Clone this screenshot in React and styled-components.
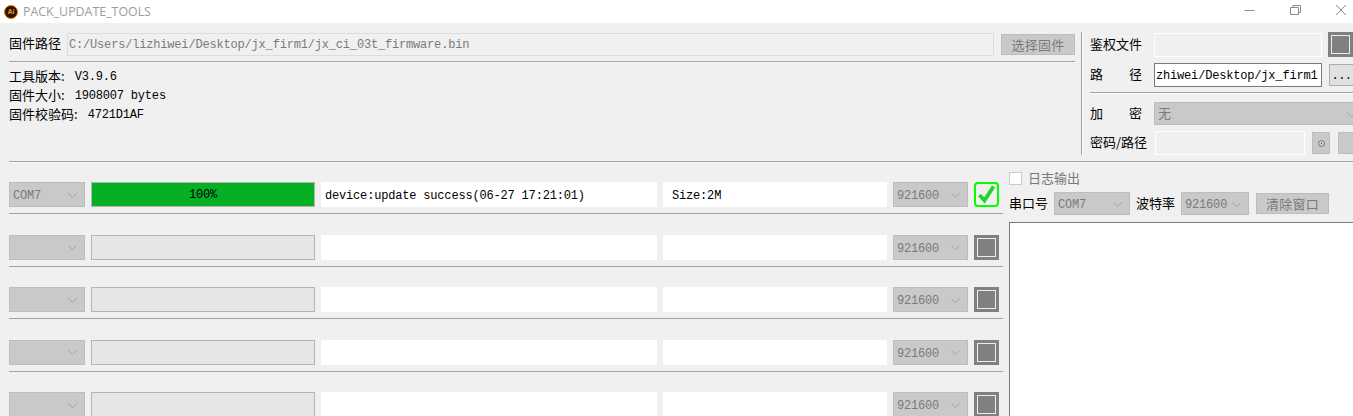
import React from 'react';
import styled, { createGlobalStyle } from 'styled-components';

const Global = createGlobalStyle`
  html, body { margin: 0; padding: 0; background: #f0f0f0; }
  * { box-sizing: border-box; }
`;
const MONO = `"Liberation Mono", "Noto Sans CJK SC", monospace`;
const CJK = `"Noto Sans CJK SC", "Liberation Sans", sans-serif`;

const Win = styled.div`
  width: 1353px; height: 416px; overflow: hidden; background: #f0f0f0;
  font-family: ${MONO}; font-size: 12px; letter-spacing: -0.18px; color: #000;
`;
const TitleBar = styled.div`
  height: 23px; background: #fff; display: flex; align-items: center; padding-left: 4px;
`;
const AppIcon = styled.div`
  width: 14px; height: 14px; border-radius: 50%; background: #2a1000; border: 1.5px solid #e8780c;
  color: #f59a23; font: bold 7px/11px "Liberation Sans", sans-serif; letter-spacing: 0; text-align: center;
`;
const Title = styled.div`
  margin-left: 5px; width: 128px; color: #9c9c9c; font: 12.4px "Open Sans", sans-serif; letter-spacing: 0; white-space: nowrap;
`;
const WinBtns = styled.div`
  margin-left: auto; display: flex; width: 138px; height: 23px;
`;
const WinBtn = styled.svg`
  width: 46px; height: 23px; flex: none;
`;
const Top = styled.div`
  height: 138px; display: flex; padding-left: 9px;
`;
const TopLeft = styled.div`
  width: 1066px; padding-top: 9px;
`;
const PathRow = styled.div`
  display: flex; align-items: center; height: 24px;
`;
const Label = styled.span`
  font-family: ${CJK}; font-size: 13px; line-height: 16px; letter-spacing: 0; padding-bottom: 2px; white-space: nowrap; color: ${p => p.$muted ? '#777' : '#000'};
  width: ${p => p.$w ? p.$w + 'px' : 'auto'}; flex: none; margin-left: ${p => p.$ml || 0}px;
  display: ${p => p.$w ? 'flex' : 'inline'}; justify-content: space-between;
`;
const Value = styled.span`
  margin-left: 10px;
`;
const Field = styled.div`
  height: ${p => p.$h || 24}px; width: ${p => p.$w}px; flex: none; margin-left: ${p => p.$ml || 0}px;
  background: ${p => p.$white ? '#fff' : '#f0f0f0'};
  border: 1px solid ${p => p.$dark ? '#7a7a7a' : p.$soft ? '#dcdcdc' : '#fff'};
  line-height: ${p => p.$h || 24}px; padding-left: 1px; overflow: hidden; white-space: nowrap;
  color: ${p => p.$white ? '#000' : '#7a7a7a'};
`;
const Sep = styled.div`
  height: 2px; border-top: 1px solid #a3a3a3; border-bottom: 1px solid #fafafa;
  margin: ${p => p.$m || '0'};
`;
const Btn = styled.div`
  flex: none; height: ${p => p.$h || 21}px; width: ${p => p.$w}px; margin-left: ${p => p.$ml || 0}px;
  background: #c9c9c9; border: 1px solid #bdbdbd; color: #7a7a7a;
  font-family: ${CJK}; font-size: 13px; line-height: ${p => (p.$h || 21) - 2}px; text-align: center; letter-spacing: 0.3px;
`;
const MoreBtn = styled.div`
  flex: none; height: 22px; width: 24px; margin-left: 7px; background: #e1e1e1; border: 1px solid #adadad; border-right: none;
  line-height: 22px; text-align: center; letter-spacing: -0.5px;
`;
const Info = styled.div`
  margin-top: 4px;
`;
const InfoLine = styled.div`
  height: 19px; white-space: nowrap; display: flex; align-items: center;
`;
const VRule = styled.div`
  width: 2px; height: 123px; margin: 9px 7px 0 6px; flex: none; border-left: 1px solid #a3a3a3; border-right: 1px solid #fafafa;
`;
const TopRight = styled.div`
  flex: 1; min-width: 0; padding-top: 9px; overflow: hidden;
`;
const SideRow = styled.div`
  display: flex; align-items: center; height: ${p => p.$h}px; margin-top: ${p => p.$mt || 0}px; width: 300px;
`;
const Square = styled.div`
  flex: none; width: 25px; height: 25px; margin-left: 6px;
  background: #808080; border: 3px solid #808080; box-shadow: inset 0 0 0 1px #ececec;
`;
const ComboBox = styled.div`
  position: relative; flex: none; width: ${p => p.$w}px; height: ${p => p.$h || 25}px; margin-left: ${p => p.$ml || 0}px;
  background: #c9c9c9; border: 1px solid #bdbdbd; color: #7a7a7a;
  font-size: ${p => p.$cjk ? 13 : 12}px; font-family: ${p => p.$cjk ? CJK : MONO};
  line-height: ${p => (p.$h || 25) + (p.$cjk ? -4 : 2)}px; padding-left: 3px; white-space: nowrap;
`;
const Chevron = styled.svg`
  position: absolute; right: 7px; top: 50%; margin-top: -2px; width: 9px; height: 5px;
`;
const Combo = ({ children, ...rest }) => (
  <ComboBox {...rest}>
    {children}
    <Chevron viewBox="0 0 9 5"><path d="M0.5 0.5L4.5 4.5L8.5 0.5" fill="none" stroke="#a0a0a0" /></Chevron>
  </ComboBox>
);
const Radio = styled.div`
  flex: none; width: 18px; height: 22px; margin-left: 7px; background: #c9c9c9; border: 1px solid #bdbdbd;
  display: flex; align-items: center; justify-content: center;
`;
const Dot = styled.div`
  width: 7px; height: 7px; border: 1px solid #777; border-radius: 50%;
  display: flex; align-items: center; justify-content: center;
  &::after { content: ''; width: 1px; height: 1px; background: #555; }
`;
const Bottom = styled.div`
  display: flex; padding-left: 9px; margin-top: -1.5px;
`;
const Rows = styled.div`
  width: 994px; flex: none;
`;
const Row = styled.div`
  height: 52.5px; padding-top: 20.5px; display: flex; align-items: flex-start;
  border-bottom: ${p => p.$last ? 'none' : '1px solid #a3a3a3'};
`;
const Progress = styled.div`
  flex: none; width: 224px; height: 25px; margin-left: 6px; border: 1px solid #b5b5b5;
  background: ${p => p.$done ? '#06b025' : '#e6e6e6'}; text-align: center; line-height: 25px;
`;
const Cell = styled.div`
  flex: none; width: ${p => p.$w}px; height: 25px; margin-left: 6px; background: #fff;
  line-height: 28px; padding-left: ${p => p.$pad}px; white-space: nowrap; overflow: hidden;
`;
const OkBox = styled.div`
  flex: none; width: 25px; height: 25px; margin-left: 6px; border: 2px solid #00ff00; border-radius: 4px; background: #f0f0f0;
  display: flex; align-items: center; justify-content: center;
`;
const Log = styled.div`
  flex: 1; min-width: 0; margin-left: 6px; padding-top: 10.5px;
`;
const CheckRow = styled.div`
  display: flex; align-items: center; height: 13px;
`;
const CheckBox = styled.div`
  width: 13px; height: 13px; background: #fff; border: 1px solid #ccc; margin-right: 6px;
`;
const Controls = styled.div`
  display: flex; align-items: center; height: 23px; margin-top: 7px;
`;
const LogBox = styled.div`
  height: 200px; margin-top: 7px; background: #fff; border: 1px solid #7a7a7a; border-bottom: none; border-right: none;
`;

const DeviceRow = ({ com, done, status, size, last }) => (
  <Row $last={last}>
    <Combo $w={76}>{com}</Combo>
    <Progress $done={done}>{done ? '100%' : ''}</Progress>
    <Cell $w={336} $pad={4}>{status}</Cell>
    <Cell $w={224} $pad={9}>{size}</Cell>
    <Combo $w={75} $ml={6}>921600</Combo>
    {done ? (
      <OkBox>
        <svg width="19" height="19" viewBox="0 0 19 19"><path d="M2.5 10L7.5 15.5L16.5 1.5" fill="none" stroke="#1fd51f" strokeWidth="3.8" /></svg>
      </OkBox>
    ) : <Square />}
  </Row>
);

export default function App() {
  return (
    <Win>
      <Global />
      <TitleBar>
        <AppIcon>Ai</AppIcon>
        <Title>PACK_UPDATE_TOOLS</Title>
        <WinBtns>
          <WinBtn viewBox="0 0 46 23"><path d="M29.5 10.5H39.5" stroke="#8a8a8a" /></WinBtn>
          <WinBtn viewBox="0 0 46 23"><path d="M29.5 7.5H37.5V14.5H29.5ZM32 7.5V5.5H39.5V12.5H37.5" fill="none" stroke="#8a8a8a" /></WinBtn>
          <WinBtn viewBox="0 0 46 23"><path d="M29 5L39 15M39 5L29 15" stroke="#8a8a8a" /></WinBtn>
        </WinBtns>
      </TitleBar>
      <Top>
        <TopLeft>
          <PathRow>
            <Label>固件路径</Label>
            <Field $w={927} $h={23} $ml={6} $soft>C:/Users/lizhiwei/Desktop/jx_firm1/jx_ci_03t_firmware.bin</Field>
            <Btn $w={74} $ml={7}>选择固件</Btn>
          </PathRow>
          <Sep $m="5px 0 0 0" />
          <Info>
            <InfoLine><Label>工具版本:</Label><Value>V3.9.6</Value></InfoLine>
            <InfoLine><Label>固件大小:</Label><Value>1908007 bytes</Value></InfoLine>
            <InfoLine><Label>固件校验码:</Label><Value>4721D1AF</Value></InfoLine>
          </Info>
        </TopLeft>
        <VRule />
        <TopRight>
          <SideRow $h={25}>
            <Label $w={52}>鉴权文件</Label>
            <Field $w={168} $ml={12} />
            <Square />
          </SideRow>
          <SideRow $h={24} $mt={6}>
            <Label $w={52}><span>路</span><span>径</span></Label>
            <Field $w={168} $ml={12} $white $dark>zhiwei/Desktop/jx_firm1</Field>
            <MoreBtn>...</MoreBtn>
          </SideRow>
          <Sep $m="5px 0 0 0" />
          <SideRow $h={23} $mt={8}>
            <Label $w={52}><span>加</span><span>密</span></Label>
            <Combo $w={210} $h={23} $ml={12} $cjk>无</Combo>
          </SideRow>
          <SideRow $h={24} $mt={6}>
            <Label $w={58}>密码/路径</Label>
            <Field $w={150} $ml={7} />
            <Radio><Dot /></Radio>
            <Btn $w={20} $h={22} $ml={8} />
          </SideRow>
        </TopRight>
      </Top>
      <Sep $m="0 0 0 9px" />
      <Bottom>
        <Rows>
          <DeviceRow com="COM7" done status="device:update success(06-27 17:21:01)" size="Size:2M" />
          <DeviceRow />
          <DeviceRow />
          <DeviceRow />
          <DeviceRow last />
        </Rows>
        <Log>
          <CheckRow><CheckBox /><Label $muted>日志输出</Label></CheckRow>
          <Controls>
            <Label>串口号</Label>
            <Combo $w={76} $h={23} $ml={6}>COM7</Combo>
            <Label $ml={6}>波特率</Label>
            <Combo $w={68} $h={23} $ml={6}>921600</Combo>
            <Btn $w={73} $ml={7}>清除窗口</Btn>
          </Controls>
          <LogBox />
        </Log>
      </Bottom>
    </Win>
  );
}
